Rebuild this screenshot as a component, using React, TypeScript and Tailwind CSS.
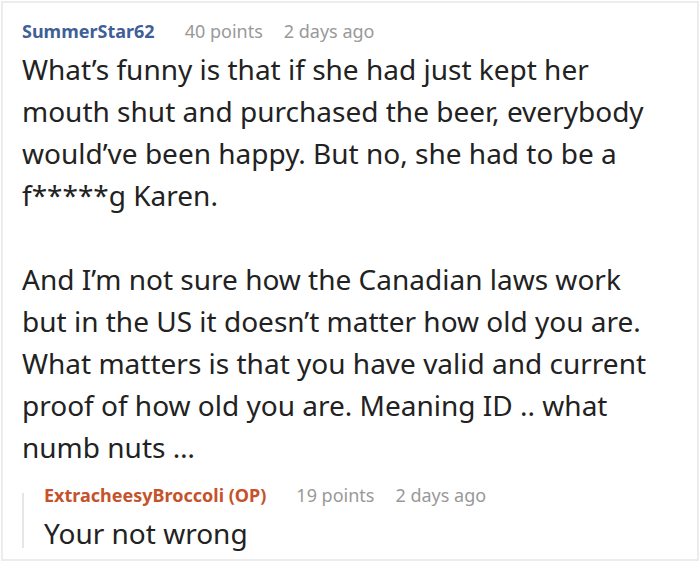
export default function App() {
  return (
    <div className="h-[562px] w-[700px] bg-white p-px font-['Noto_Sans',sans-serif]">
      <div className="h-full border-2 border-[#ececec] pl-[19px] pr-[26px] pt-[15px]">
        <div className="flex items-baseline text-[18px] leading-[26px]">
          <span className="font-bold text-[#3f5f97]">SummerStar62</span>
          <span className="ml-[30px] text-[#999]">40 points</span>
          <span className="ml-[21px] text-[#999]">2 days ago</span>
        </div>
        <div className="mt-[4px] text-[28px] leading-[42px] text-[#222]">
          <p>
            What’s funny is that if she had just kept her mouth shut and
            purchased the beer, everybody would’ve been happy. But no, she had
            to be a f*****g Karen.
          </p>
          <p className="mt-[42px]">
            And I’m not sure how the Canadian laws work but in the US it
            doesn’t matter how old you are. What matters is that you have valid
            and current proof of how old you are. Meaning ID .. what numb nuts
            …
          </p>
        </div>
        <div className="mt-[14px] flex">
          <div className="mb-[6px] mt-[11px] w-[2px] bg-[#e6e6e6]" />
          <div className="pl-[20px]">
            <div className="flex items-baseline text-[18px] leading-[26px]">
              <span className="font-bold text-[#c4532b]">
                ExtracheesyBroccoli (OP)
              </span>
              <span className="ml-[30px] text-[#999]">19 points</span>
              <span className="ml-[21px] text-[#999]">2 days ago</span>
            </div>
            <p className="mt-[4px] text-[28px] leading-[42px] text-[#222]">
              Your not wrong
            </p>
          </div>
        </div>
      </div>
    </div>
  );
}
